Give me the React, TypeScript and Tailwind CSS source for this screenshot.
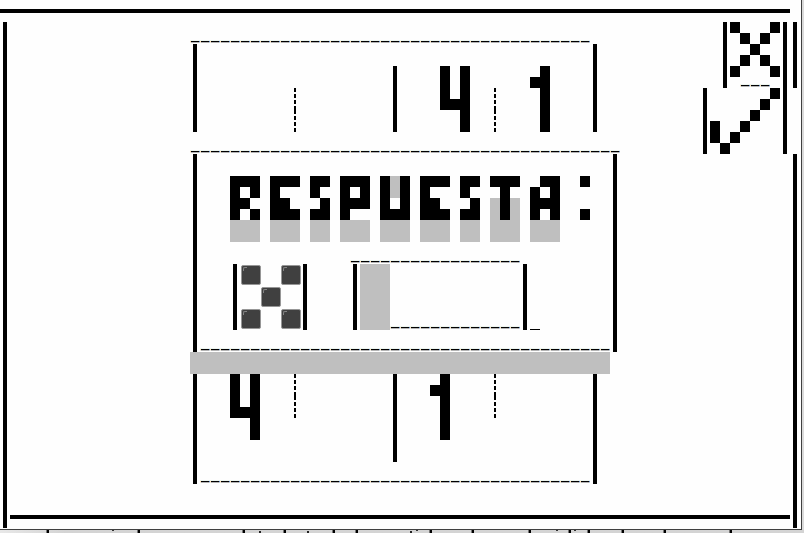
const COLS = 80;
const ROWS = 24;

type Run = [col: number, text: string];

const rep = (ch: string, n: number) => ch.repeat(n);

// Screen contents, one list of runs per terminal row.
const screen: Run[][] = [
  [[0, rep('━', 79)]],
  [[0, '┃'], [19, rep('—', 40)], [72, '┃▀▄ ▄▀┃┃']],
  [[0, '┃'], [19, '┃'], [59, '┃'], [72, '┃ ▄▀▄ ┃┃']],
  [[0, '┃'], [19, '┃'], [39, '┃'], [44, '█ █'], [53, '▄█'], [59, '┃'], [72, '┃▀———▀┃┃']],
  [[0, '┃'], [19, '┃'], [29, '╎'], [39, '┃'], [44, '█▄█'], [49, '╎'], [54, '█'], [59, '┃'], [70, '┃     ▄▀┃']],
  [[0, '┃'], [19, '┃'], [29, '╎'], [39, '┃'], [46, '█'], [49, '╎'], [54, '█'], [59, '┃'], [70, '┃▄  ▄▀  ┃']],
  [[0, '┃'], [19, rep('—', 43)], [70, '┃▀▄▀    ┃']],
  [[0, '┃'], [19, '┃'], [61, '┃'], [79, '┃']],
  [[0, '┃'], [19, '┃'], [23, '█▀█ █▀▀ █▀ █▀█ █░█ █▀▀ █▀ ▀█▀ ▄▀█  ▀'], [61, '┃'], [79, '┃']],
  [[0, '┃'], [19, '┃'], [23, '█▀▄ ██▄ ▄█ █▀▀ █▄█ ██▄ ▄█ ░█░ █▀█  ▄'], [61, '┃'], [79, '┃']],
  [[0, '┃'], [19, '┃'], [23, '░░░ ░░░ ░░ ░░░ ░░░ ░░░ ░░ ░░░ ░░░'], [61, '┃'], [79, '┃']],
  [[0, '┃'], [19, '┃'], [35, rep('—', 17)], [61, '┃'], [79, '┃']],
  [[0, '┃'], [19, '┃'], [23, '┃■   ■ ┃'], [35, '┃░░░'], [52, '┃'], [61, '┃'], [79, '┃']],
  [[0, '┃'], [19, '┃'], [23, '┃  ■   ┃'], [35, '┃░░░'], [52, '┃'], [61, '┃'], [79, '┃']],
  [[0, '┃'], [19, '┃'], [23, '┃■   ■ ┃'], [35, '┃░░░' + rep('—', 13) + '┃_'], [61, '┃'], [79, '┃']],
  [[0, '┃'], [19, '┃' + rep('—', 41) + '┃'], [79, '┃']],
  [[0, '┃'], [19, rep('░', 42)], [79, '┃']],
  [[0, '┃'], [19, '┃'], [23, '█ █'], [29, '╎'], [39, '┃'], [43, '▄█'], [49, '╎'], [59, '┃'], [79, '┃']],
  [[0, '┃'], [19, '┃'], [23, '█▄█'], [29, '╎'], [39, '┃'], [44, '█'], [49, '╎'], [59, '┃'], [79, '┃']],
  [[0, '┃'], [19, '┃'], [25, '█'], [39, '┃'], [44, '█'], [59, '┃'], [79, '┃']],
  [[0, '┃'], [19, '┃'], [39, '┃'], [59, '┃'], [79, '┃']],
  [[0, '┃'], [19, '┃' + rep('—', 39) + '┃'], [79, '┃']],
  [[0, '┃'], [79, '┃']],
  [[0, '┃' + rep('━', 78) + '┃']],
];

function expand(runs: Run[]): string[] {
  const line: string[] = Array(COLS).fill(' ');
  for (const [col, text] of runs) {
    [...text].forEach((ch, i) => {
      line[col + i] = ch;
    });
  }
  return line;
}

function Cell({ ch }: { ch: string }) {
  switch (ch) {
    case '█':
      return <div className="h-full w-2.5 shrink-0 bg-black" />;
    case '▀':
      return (
        <div className="h-full w-2.5 shrink-0">
          <div className="h-1/2 bg-black" />
        </div>
      );
    case '▄':
      return (
        <div className="flex h-full w-2.5 shrink-0 items-end">
          <div className="h-1/2 w-full bg-black" />
        </div>
      );
    case '░':
      return <div className="h-full w-2.5 shrink-0 bg-[#bfbfbf]" />;
    case '┃':
      return (
        <div className="h-full w-2.5 shrink-0 px-[3px]">
          <div className="h-full bg-black" />
        </div>
      );
    case '━':
      return (
        <div className="h-full w-2.5 shrink-0 py-[9px]">
          <div className="h-full bg-black" />
        </div>
      );
    case '╎':
      return (
        <div className="flex h-full w-2.5 shrink-0 flex-col items-center justify-between">
          <div className="h-1 w-0.5 bg-black" />
          <div className="h-1 w-0.5 bg-black" />
          <div className="h-1 w-0.5 bg-black" />
          <div className="h-1 w-0.5 bg-black" />
        </div>
      );
    case '—':
      return (
        <div className="h-full w-2.5 shrink-0 pt-[18px]">
          <div className="h-px bg-[#eef5f0]" />
          <div className="flex h-px">
            <div className="w-px bg-[#ffe0b0]" />
            <div className="w-2 bg-black" />
            <div className="w-px bg-[#6088c0]" />
          </div>
          <div className="flex h-px">
            <div className="w-px bg-[#f3eee4]" />
            <div className="w-2 bg-[#b4b4b4]" />
            <div className="w-px bg-[#d0d6e0]" />
          </div>
        </div>
      );
    case '■':
      return (
        <div className="h-full w-2.5 shrink-0 pt-px pl-px">
          <div className="h-5 w-5 rounded-[2px] border border-[#969696] bg-[#404040] pt-px pl-px">
            <div className="h-1 w-1 rounded-tl-[2px] border-t border-l border-[#858585]" />
          </div>
        </div>
      );
    case '_':
      return (
        <div className="flex h-full w-2.5 shrink-0 items-end">
          <div className="h-px w-full bg-black" />
        </div>
      );
    default:
      return <div className="h-full w-2.5 shrink-0" />;
  }
}

// Tips of the page's text showing under the window: [x, kind].
const tips: [number, 'stem' | 'dot' | 'tee'][] = [
  [46, 'stem'], [112, 'dot'], [137, 'stem'], [242, 'stem'], [259, 'tee'],
  [283, 'stem'], [307, 'tee'], [332, 'stem'], [355, 'stem'], [410, 'tee'],
  [416, 'dot'], [429, 'stem'], [471, 'stem'], [528, 'stem'], [556, 'dot'],
  [568, 'stem'], [574, 'dot'], [587, 'stem'], [621, 'stem'], [663, 'stem'],
  [729, 'stem'],
];

const tipClass = {
  stem: 'h-[3px] w-[3px] bg-black border-l border-[#777777]',
  dot: 'h-px w-0.5 bg-[#333333]',
  tee: 'mt-px h-0.5 w-0.5 bg-[#222222]',
};

export default function App() {
  return (
    <div className="flex h-[533px] w-[804px] flex-col overflow-hidden bg-[#d4d4d4]">
      <div className="flex h-[530px]">
        <div className="w-[802px] border-r border-b border-[#404040] bg-[#fefefe]">
          {screen.slice(0, ROWS).map((runs, r) => (
            <div key={r} className="flex h-[22px] w-[800px]">
              {expand(runs).map((ch, c) => (
                <Cell key={c} ch={ch} />
              ))}
            </div>
          ))}
        </div>
        <div className="w-0.5 bg-[#dadada]" />
      </div>
      <div className="flex h-[3px] bg-linear-to-r from-[#e8e8e8] to-[#d4d4d4] to-8%">
        {tips.map(([x, kind], i) => (
          <div
            key={x}
            className="w-0.5 shrink-0"
            style={{ marginLeft: x - (i ? tips[i - 1][0] + 2 : 0) }}
          >
            <div className={tipClass[kind]} />
          </div>
        ))}
      </div>
    </div>
  );
}
